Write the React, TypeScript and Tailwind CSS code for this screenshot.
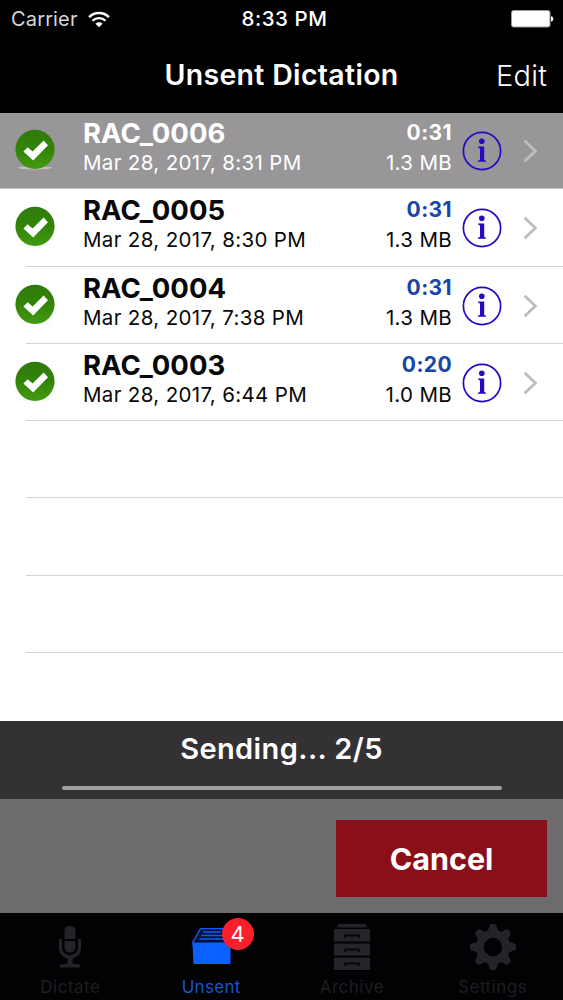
import type { ReactNode } from "react";

type Dictation = {
  name: string;
  date: string;
  duration: string;
  size: string;
  selected?: boolean;
};

const dictations: Dictation[] = [
  { name: "RAC_0006", date: "Mar 28, 2017, 8:31 PM", duration: "0:31", size: "1.3 MB", selected: true },
  { name: "RAC_0005", date: "Mar 28, 2017, 8:30 PM", duration: "0:31", size: "1.3 MB" },
  { name: "RAC_0004", date: "Mar 28, 2017, 7:38 PM", duration: "0:31", size: "1.3 MB" },
  { name: "RAC_0003", date: "Mar 28, 2017, 6:44 PM", duration: "0:20", size: "1.0 MB" },
];

const WifiIcon = () => (
  <svg width="22" height="17" viewBox="0 0 22 17" fill="none" stroke="#fff" strokeWidth="2.3">
    <path d="M1 6.1A14.2 14.2 0 0 1 21 6.1" />
    <path d="M4.5 9.8A9.2 9.2 0 0 1 17.5 9.8" />
    <path d="M11 16.3L7.4 12.7A5.2 5.2 0 0 1 14.6 12.7Z" fill="#fff" stroke="none" />
  </svg>
);

const BatteryIcon = () => (
  <svg width="43" height="18" viewBox="0 0 43 18">
    <rect x="0.5" y="0.5" width="38.5" height="16.5" rx="2" fill="#fff" stroke="#999" />
    <path d="M40 6.3C43.2 6.8 43.2 11 40 11.5Z" fill="#fff" />
  </svg>
);

const CheckIcon = () => (
  <svg width="40" height="42" viewBox="0 0 40 42">
    <defs>
      <linearGradient id="green" x1="0" y1="0" x2="0" y2="1">
        <stop offset="0" stopColor="#2f7a0e" />
        <stop offset="0.5" stopColor="#328407" />
        <stop offset="1" stopColor="#439a10" />
      </linearGradient>
    </defs>
    <ellipse cx="20" cy="38.8" rx="17" ry="1.6" fill="#e9efe6" opacity="0.5" />
    <circle cx="20" cy="20.3" r="19.6" fill="url(#green)" />
    <path d="M8.4 22.6L12.6 18.2L17.6 22.4L28.6 11.6L33 16.2L18.2 31.4Z" fill="#fff" />
  </svg>
);

const InfoIcon = () => (
  <svg width="40" height="40" viewBox="0 0 40 40">
    <circle cx="20" cy="20" r="18.6" fill="none" stroke="#2408c4" strokeWidth="1.7" />
    <circle cx="19.8" cy="10.3" r="2.8" fill="#2408c4" />
    <path d="M16 15.6H22.2V28.2Q22.2 29.6 24 29.7V30.7H15.8V29.7Q18 29.6 18 28.2V18.2Q18 16.7 16 16.6Z" fill="#2408c4" />
  </svg>
);

const ChevronIcon = () => (
  <svg width="15" height="24" viewBox="0 0 15 24" fill="none" stroke="#bdbdc0" strokeWidth="2.8">
    <path d="M1.6 1.7L12.4 12L1.6 22.3" />
  </svg>
);

const MicIcon = () => (
  <svg width="22" height="42" viewBox="0 0 22 42" fill="#242328">
    <path d="M5.5 13V5Q5.5 0 11 0Q16.5 0 16.5 5V13Z" />
    <path d="M5.5 15H16.5V21Q16.5 26.5 11 26.5Q5.5 26.5 5.5 21Z" />
    <path d="M0 13H3V22Q3.5 29 11 29Q18.5 29 19 22V13H22V23Q21 31 13.5 32.5V37Q14 38 21 38.5V41.5H1V38.5Q8 38 8.5 37V32.5Q1 31 0 23Z" />
  </svg>
);

const TrayIcon = () => (
  <svg width="39" height="37" viewBox="0 0 39 37">
    <path d="M8.5 0.6H30.5L38 14V16.5H1V14Z" fill="#03103a" stroke="#0b5cff" strokeWidth="1.4" />
    <path d="M11 4H29M9.3 7.5H30.5M7.5 11H32" stroke="#0b5cff" strokeWidth="1.5" />
    <path d="M0.5 14.5H38.5V35Q38.5 36 37.5 36H2.3Q1.3 36 1.3 35Z" fill="#0b61ff" />
  </svg>
);

const CabinetIcon = () => (
  <svg width="36" height="46" viewBox="0 0 36 46">
    <path d="M5 0H31L34 3.5H2Z" fill="#242328" />
    <path d="M0 5H36V17.5H0ZM0 19.5H36V31.5H0ZM0 33.5H36V46H0Z" fill="#242328" />
    <path d="M11 14V11.5H25V14M11 28V25.5H25V28M11 42V39.5H25V42" fill="none" stroke="#08080a" strokeWidth="1.8" />
  </svg>
);

const GearIcon = () => (
  <svg width="46" height="46" viewBox="-23 -23 46 46" fill="#242328">
    <circle r="13.2" fill="none" stroke="#242328" strokeWidth="8" />
    {[0, 45, 90, 135, 180, 225, 270, 315].map((angle) => (
      <path key={angle} d="M-5.5 -15L-3.4 -21.5Q-3 -23 -1.5 -23H1.5Q3 -23 3.4 -21.5L5.5 -15Z" transform={`rotate(${angle})`} />
    ))}
  </svg>
);

const DictationRow = ({ item }: { item: Dictation }) => (
  <div className={item.selected ? "h-[76.25px] bg-[#989698] border-b border-[#c9c8ca] text-white" : "h-[77.25px] text-[#080808]"}>
    <div className={item.selected ? "flex h-full pl-[15px]" : "flex h-full pl-[15px] pt-px"}>
      <div className="mt-[16px] w-[68px]">
        <CheckIcon />
      </div>
      <div className="flex-1 pt-[4px]">
        <p className="text-[27.5px] leading-[32px] font-bold tracking-[0.05px]">{item.name}</p>
        <p className="text-[20.5px] leading-[28px] tracking-[0.34px]">{item.date}</p>
      </div>
      <div className="pt-[4px] text-right">
        <p className={item.selected ? "text-[21px] leading-[32px] font-bold tracking-[0.4px]" : "text-[21px] leading-[32px] font-bold tracking-[0.4px] text-[#1745a8]"}>{item.duration}</p>
        <p className="text-[20.5px] leading-[28px] tracking-[0.34px]">{item.size}</p>
      </div>
      <div className="mt-[18px] ml-[10px]">
        <InfoIcon />
      </div>
      <div className="mt-[26px] ml-[21px] w-[40px]">
        <ChevronIcon />
      </div>
    </div>
    {!item.selected && <div className="-mt-px ml-[26px] h-px bg-[#d3d3d5]" />}
  </div>
);

const Tab = ({ label, active, children }: { label: string; active?: boolean; children: ReactNode }) => (
  <div className="flex flex-1 flex-col items-center">
    <div className="relative flex h-[67px] items-center">
      {children}
      {active && (
        <span className="absolute top-[5px] left-[30px] flex size-[32px] items-center justify-center rounded-full bg-[#fb1f2b] text-[22px] text-white">
          4
        </span>
      )}
    </div>
    <p className={active ? "text-[17px] leading-[15px] tracking-[0.3px] text-[#1658cb]" : "text-[17px] leading-[15px] tracking-[0.5px] text-[#1f1e22]"}>
      {label}
    </p>
  </div>
);

export default function App() {
  return (
    <div className="flex h-[1000px] w-[563px] flex-col overflow-hidden bg-white font-['Inter',sans-serif]">
      <header className="h-[113px] bg-black text-white">
        <div className="grid h-[38px] grid-cols-[1fr_auto_1fr] items-center pr-[9px] pl-[15px] text-[20px]">
          <div className="-ml-[4px] flex items-center gap-[10px] text-[#d7d7d9]">
            <span className="tracking-[0.15px]">Carrier</span>
            <WifiIcon />
          </div>
          <span className="text-center text-[20.5px] font-medium tracking-[0.55px]">8:33 PM</span>
          <div className="flex justify-end">
            <BatteryIcon />
          </div>
        </div>
        <div className="grid h-[75px] grid-cols-[1fr_auto_1fr] items-center px-[16px]">
          <h1 className="col-start-2 text-[28.5px] font-semibold tracking-[0.32px]">Unsent Dictation</h1>
          <span className="text-right text-[29px] font-light tracking-[0.2px]">Edit</span>
        </div>
      </header>

      <main className="h-[608px]">
        {dictations.map((item) => (
          <DictationRow key={item.name} item={item} />
        ))}
        {[0, 1, 2].map((row) => (
          <div key={row} className="flex h-[77.25px] flex-col justify-end pl-[26px]">
            <div className="h-px bg-[#d3d3d5]" />
          </div>
        ))}
      </main>

      <section className="h-[78px] bg-[#333134] pt-[10px] text-center text-white">
        <p className="text-[29px] leading-[36px] font-semibold tracking-[0.4px]">Sending... 2/5</p>
        <div className="mx-auto mt-[19px] h-[4px] w-[440px] rounded-full bg-[#a19fa2]" />
      </section>

      <section className="flex h-[114px] justify-end bg-[#6d6b6e] pt-[21px] pr-[16px]">
        <button className="h-[77px] w-[211px] bg-[#8a0f18] text-[30.5px] font-bold text-white">Cancel</button>
      </section>

      <nav className="flex h-[87px] bg-[#020103]">
        <Tab label="Dictate"><MicIcon /></Tab>
        <Tab label="Unsent" active><TrayIcon /></Tab>
        <Tab label="Archive"><CabinetIcon /></Tab>
        <Tab label="Settings"><GearIcon /></Tab>
      </nav>
    </div>
  );
}
